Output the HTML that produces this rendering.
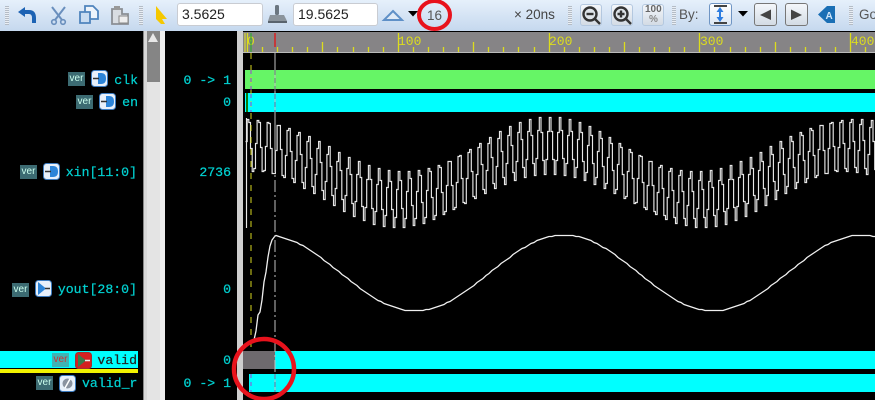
<!DOCTYPE html>
<html><head><meta charset="utf-8"><style>
html,body{margin:0;padding:0;background:#000}
#p{position:relative;width:875px;height:400px;overflow:hidden;background:#000;font-family:"Liberation Sans",sans-serif}
.a{position:absolute}
#tb{left:0;top:0;width:875px;height:31px;background:linear-gradient(#e6f0fb,#c5d8ee)}
.inp{position:absolute;top:3px;height:21px;background:#fff;border:1px solid #c9ccd2;border-radius:3px;font-size:14px;line-height:21px;color:#222;padding-left:4px;box-sizing:content-box}
.t{position:absolute;font-size:13px;color:#444;white-space:nowrap}
.g{position:absolute;top:6px;width:4px;height:19px;background:repeating-linear-gradient(#b4bcc6 0 1px,#e9eef4 1px 2px)}
.m{position:absolute;font:13.2px/16px "Liberation Mono",monospace;color:#00d0d0;white-space:pre;text-align:right;-webkit-text-stroke:.25px currentColor}
.v{position:absolute;width:17px;height:14px;background:#3c6b72;color:#cfe;font:10px/14px "Liberation Sans",sans-serif;text-align:center}
.b{position:absolute;border-radius:3px;box-sizing:border-box;background:linear-gradient(#f4f7fb,#d3dbe4);border:1px solid #b4c8df}
.bar{position:absolute;height:19px}
svg{position:absolute;left:0;top:0}
</style></head><body><div id="p">
<div class="a" id="tb"></div>
<div class="g" style="left:5px"></div><div class="g" style="left:139px"></div><div class="g" style="left:568px"></div><div class="g" style="left:672px"></div><div class="g" style="left:849px"></div>
<div class="inp" style="left:177px;width:80px">3.5625</div>
<div class="inp" style="left:293px;width:79px">19.5625</div>
<div class="t" style="left:427px;top:8px;font-size:13.5px;color:#555">16</div>
<div class="t" style="left:514px;top:7px;font-size:13.5px">× 20ns</div>
<div class="t" style="left:679px;top:7px;font-size:13.5px;color:#555">By:</div>
<div class="t" style="left:859px;top:7px;font-size:13.5px;color:#555">Go</div>
<div class="b" style="left:580px;top:4px;width:22px;height:22px"></div>
<div class="b" style="left:611px;top:4px;width:22px;height:22px"></div>
<div class="b" style="left:642px;top:4px;width:22px;height:22px"></div>
<div class="b" style="left:709px;top:3px;width:23px;height:23px;background:linear-gradient(#fff,#dbe6f3);border-color:#6f95c4"></div>
<div class="b" style="left:754px;top:3px;width:23px;height:23px;border-color:#777"></div>
<div class="b" style="left:785px;top:3px;width:23px;height:23px;border-color:#777"></div>
<div class="t" style="left:645px;top:5px;font:bold 10px/10px 'Liberation Sans',sans-serif;color:#666">100</div>
<div class="t" style="left:649px;top:15px;font:bold 10px/10px 'Liberation Sans',sans-serif;color:#888">%</div>
<svg width="875" height="32" viewBox="0 0 875 32" fill="none">
<path d="M22 12H29Q34 12 34 18V23" stroke="#1d63b4" stroke-width="4"/>
<path d="M18 12L25 7V17Z" fill="#1d63b4"/>
<g stroke="#6a8fbd" stroke-width="2"><path d="M52 7L62 20M65 7L55 20"/><circle cx="54" cy="22" r="2.300" stroke-width="1.600"/><circle cx="63" cy="22" r="2.300" stroke-width="1.600"/></g>
<path d="M85 6H93L98 11V19H85Z" fill="#eef4fb" stroke="#4f84bd" stroke-width="1.800"/>
<path d="M80 12H90V23H80Z" fill="#c9dcf1" stroke="#4f84bd" stroke-width="1.800"/>
<path d="M112 9H122V14H128V24H112Z" fill="#d9dde2" stroke="#8b8f94" stroke-width="1.800"/>
<path d="M114 6H120V10H114Z" fill="#999"/><path d="M119 16H128V23H119Z" fill="#eee" stroke="#888"/>
<path d="M156 6L167 19L162 19L165 24L161 24L156 19Z" fill="#f5c800"/>
<rect x="275" y="5" width="4" height="10" rx="1.500" fill="#6b7680"/><path d="M270 15H284L287 21H268Z" fill="#8b949c"/><path d="M268 21H287V23H268Z" fill="#59636d"/>
<path d="M393 11L402 20H384Z" fill="#dfeaf6" stroke="#5f90c7" stroke-width="2"/>
<path d="M408 11H418L413 16.500Z" fill="#000"/>
<g stroke="#333" stroke-width="2.400"><circle cx="590" cy="14" r="6.500" fill="#dfe5ea"/><path d="M595 19L600 24"/><path d="M586.500 14H593.500"/></g>
<g stroke="#333" stroke-width="2.400"><circle cx="621" cy="14" r="6.500" fill="#dfe5ea"/><path d="M626 19L631 24"/><path d="M617.500 14H624.500M621 10.500V17.500"/></g>
<path d="M714 6H727M714 23H727" stroke="#444" stroke-width="2"/><path d="M720 9V20" stroke="#2e7de0" stroke-width="2"/><path d="M720 7L716.500 12H723.500ZM720 22L716.500 17H723.500Z" fill="#2e7de0"/>
<path d="M738 11H748L743 16.500Z" fill="#000"/>
<path d="M771 9.500V20L760 15Z" fill="#444"/><path d="M791 9.500V20L802 15Z" fill="#444"/>
<path d="M818 14.500L827 6H835V23H827Z" fill="#1a6fb5"/>
<text x="825.500" y="19" font-family="Liberation Sans" font-size="10" font-weight="bold" fill="#cfe6fa">A</text>
</svg>

<div class="a" style="left:143px;top:31px;width:22px;height:369px;background:#d8d8d8"></div>
<div class="a" style="left:143px;top:31px;width:1px;height:369px;background:#888"></div>
<div class="a" style="left:147px;top:31px;width:13px;height:369px;background:#e4e4e4"></div>
<div class="a" style="left:147px;top:31px;width:13px;height:51px;background:#858585"></div>
<div class="a" style="left:160px;top:31px;width:5px;height:369px;background:#eeeeee"></div>
<div class="a" style="left:237px;top:31px;width:6px;height:369px;background:#cfcfcf"></div>
<div class="a" style="left:243px;top:32px;width:632px;height:20px;background:#868486"></div>
<div class="a" style="left:243px;top:52px;width:632px;height:1px;background:#bbb"></div>

<div class="m" style="left:60px;top:73px;width:78px">clk</div>
<div class="m" style="left:60px;top:95px;width:78px">en</div>
<div class="m" style="left:40px;top:165px;width:97px">xin[11:0]</div>
<div class="m" style="left:30px;top:282px;width:107px">yout[28:0]</div>
<div class="a" style="left:0;top:351px;width:138px;height:17px;background:#00ffff"></div>
<div class="a" style="left:0;top:369px;width:138px;height:4px;background:#f2f200"></div>
<div class="m" style="left:60px;top:353px;width:77px;color:#222">valid</div>
<div class="m" style="left:82px;top:376px;width:55px;overflow:hidden;text-align:left">valid_r</div>
<div class="m" style="left:170px;top:73px;width:61px">0 -&gt; 1</div>
<div class="m" style="left:170px;top:95px;width:61px">0</div>
<div class="m" style="left:170px;top:165px;width:61px">2736</div>
<div class="m" style="left:170px;top:282px;width:61px">0</div>
<div class="m" style="left:170px;top:353px;width:61px">0</div>
<div class="m" style="left:170px;top:376px;width:61px">0 -&gt; 1</div>

<div class="v" style="left:68px;top:72px">ver</div><div class="v" style="left:76px;top:95px">ver</div>
<div class="v" style="left:20px;top:165px">ver</div><div class="v" style="left:12px;top:283px">ver</div>
<div class="v" style="left:52px;top:353px;background:#3fb4b4;color:#c33">ver</div><div class="v" style="left:36px;top:376px">ver</div>

<svg width="875" height="400" viewBox="0 0 875 400" fill="none">
<path d="M148 42L153 33L158 42Z" fill="#e8e8e8"/>
<g id="pins">
<g transform="translate(91,70)"><rect x=".5" y=".5" width="16" height="16" rx="3" fill="#e8f0fa" stroke="#3d7cc0"/><path d="M7 3H10Q15 3 15 8.500T10 14H7Z" fill="#2c84d8"/><path d="M2 8.500H8" stroke="#333" stroke-width="1.500"/></g>
<g transform="translate(99,93)"><rect x=".5" y=".5" width="16" height="16" rx="3" fill="#e8f0fa" stroke="#3d7cc0"/><path d="M7 3H10Q15 3 15 8.500T10 14H7Z" fill="#2c84d8"/><path d="M2 8.500H8" stroke="#333" stroke-width="1.500"/></g>
<g transform="translate(43,163)"><rect x=".5" y=".5" width="16" height="16" rx="3" fill="#e8f0fa" stroke="#3d7cc0"/><path d="M7 3H10Q15 3 15 8.500T10 14H7Z" fill="#2c84d8"/><path d="M2 8.500H8" stroke="#333" stroke-width="1.500"/></g>
<g transform="translate(35,280)"><rect x=".5" y=".5" width="16" height="16" rx="3" fill="#e8f0fa" stroke="#3d7cc0"/><path d="M3 2L11 8.500L3 15Z" fill="#2c84d8"/><path d="M10 8.500H15" stroke="#333" stroke-width="1.500"/></g>
<g transform="translate(75,352)"><rect x=".5" y=".5" width="16" height="16" rx="3" fill="#d42020" stroke="#a03030"/><path d="M3 2L11 8.500L3 15Z" fill="#3a7a4a"/><path d="M10 8.500H15" stroke="#eee" stroke-width="1.500"/></g>
<g transform="translate(59,375)"><rect x=".5" y=".5" width="16" height="16" rx="3" fill="#e8f0fa" stroke="#3d7cc0"/><circle cx="8.500" cy="8.500" r="5" fill="#8a93a0"/><path d="M6 13L11 4" stroke="#fff" stroke-width="1.500"/></g>
</g>
<g id="ruler" stroke="#dcdc1e" stroke-width="1.300" fill="none"></g>
<g font-family="Liberation Mono" font-size="13" fill="#dcdc1e">
<text x="247" y="45">0</text><text x="398" y="45">100</text><text x="549" y="45">200</text><text x="700" y="45">300</text><text x="851" y="45">400</text>
</g>
<rect x="245" y="70" width="630" height="19" fill="#66f566"/>
<rect x="245" y="93" width="630" height="19" fill="#00ffff"/>
<rect x="246" y="93" width="2" height="19" fill="#0a7a0a"/>
<rect x="275" y="351" width="600" height="18" fill="#00ffff"/>
<rect x="243" y="351" width="32" height="18" fill="#6e6a6e"/>
<rect x="249" y="374" width="626" height="18" fill="#00ffff"/>
<path id="xin" stroke="#e8e8e8" stroke-width="1.150"/>
<path id="yout" stroke="#f0f0f0" stroke-width="1.300"/>
<path d="M245 33V52" stroke="#e8e820"/><path d="M251 33V52" stroke="#20b020"/><path d="M275 33V47" stroke="#d82020" stroke-width="1.500"/>
<path d="M251 53V351" stroke="#d8d820" stroke-dasharray="6 6"/>
<path d="M251 70V112M251 374V392" stroke="#a040d0" stroke-dasharray="4 4"/>
<path d="M275 53V160" stroke="#c0c0c0"/>
<path d="M275 160V400" stroke="#c0c0c0" stroke-dasharray="12 3 2 3"/>
<path d="M275 70V112M275 374V392" stroke="#8a6a9a" stroke-dasharray="5 3"/>
<ellipse cx="434.500" cy="15" rx="15.500" ry="14" stroke="#e8121c" stroke-width="4"/>
<ellipse cx="264" cy="369" rx="30" ry="30" stroke="#e8121c" stroke-width="4.500"/>
</svg>
<script>
(function(){
var S=1.508,X0=247,r='';
for(var u=0;u<=420;u+=10){var x=Math.round(X0+u*S)+.5;if(x>875)break;
var h=u%100==0?33:(u%50==0?42:47);r+='M'+x+' '+h+'V52';}
document.getElementById('ruler').innerHTML='<path d="'+r+'"/>';
var st=1.66,d='M246.500 228V118',P=2*Math.PI;
var start=549.3-183*st,x=start,first=true;
for(var i=0;x<880;i++){x=start+i*st;
var y=172-27*Math.cos(P*(x-549.3)/300)-28.5*Math.cos(P*(x-549.3)/10.05);
y=Math.round(y)+.5;
d+=(first?'M':'L')+x.toFixed(1)+' '+y+'H'+(x+st).toFixed(1);first=false;}
document.getElementById('xin').setAttribute('d',d);
var e='M254 340L256 331L258 315L260 312L262 300L264 282L266 272L268 257L270 246L272 240L275 236';
for(var q=276;q<880;q+=3){var yy=272.5-38*Math.cos(P*(q-564)/298);e+='L'+q+' '+(Math.round(yy)+.5);}
document.getElementById('yout').setAttribute('d',e);
})();
</script>
</div></body></html>
